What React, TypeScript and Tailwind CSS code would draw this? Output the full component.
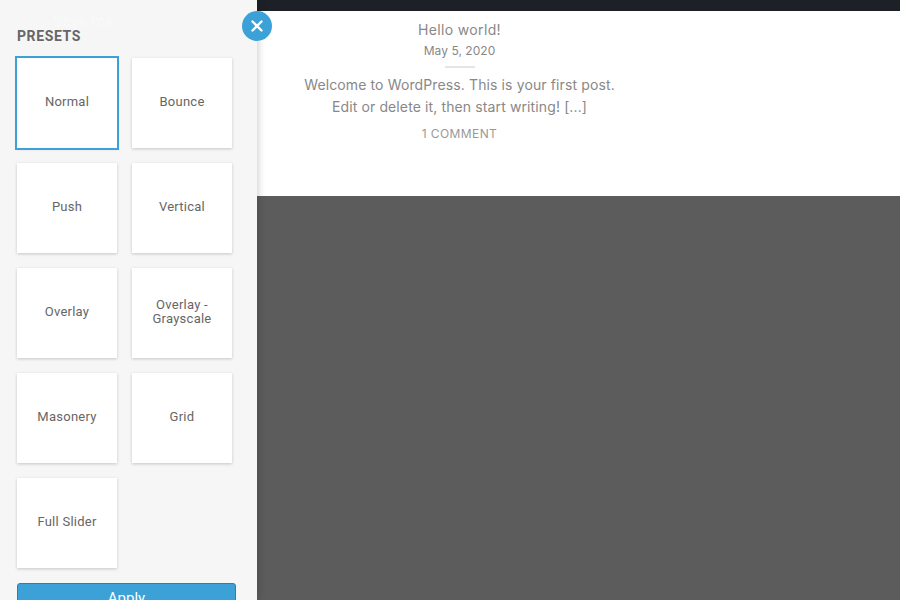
export default function App() {
  const presets = ["Normal", "Bounce", "Push", "Vertical", "Overlay", "Overlay - Grayscale", "Masonery", "Grid", "Full Slider"];
  return (
    <div className="relative flex h-[600px] w-[900px] overflow-hidden bg-[#5c5c5c]">
      <aside className="relative z-10 flex h-[600px] w-[257px] shrink-0 flex-col overflow-hidden bg-[#f6f6f6] px-[17px] pt-[28px] shadow-[0_0_8px_rgba(0,0,0,0.25)] font-['Roboto',sans-serif]">
        <span className="absolute left-[53px] top-[12px] text-[16px] leading-[20px] text-[#f9f9f9]">Save me</span>
        <h2 className="text-[14px] font-bold leading-[16px] tracking-[0.6px] text-[#666666]">PRESETS</h2>
        <div className="mt-[14px] grid w-[215px] grid-cols-[100px_100px] gap-[15px]">
          {presets.map((p, i) => (
            <button
              key={p}
              className={`flex h-[90px] w-[100px] items-center justify-center bg-white px-2 pb-[3px] text-center text-[13px] leading-[14px] tracking-[0.25px] text-[#666666] shadow-[0_1px_3px_rgba(0,0,0,0.2)] ${i === 0 ? "outline-2 outline-[#3ba1d6]" : ""}`}
            >
              {p}
            </button>
          ))}
        </div>
        <button className="mt-[15px] h-[30px] w-[219px] shrink-0 rounded-[3px] border border-[#2a7fb0] bg-[#3ba1d6] text-[15px] leading-[26px] text-white">Apply</button>
      </aside>
      <button className="absolute left-[242px] top-[11px] z-20 flex h-[30px] w-[30px] items-center justify-center rounded-full bg-[#3ba1d6]">
        <svg width="12" height="12" viewBox="0 0 12 12"><path d="M1.5 1.5 10.5 10.5M10.5 1.5 1.5 10.5" stroke="#fff" strokeWidth="2.4" strokeLinecap="round" /></svg>
      </button>
      <main className="flex-1">
        <div className="h-[11px] bg-[#1d2027]" />
        <article className="h-[185px] bg-white font-['Inter',sans-serif]">
          <div className="flex w-[405px] flex-col items-center text-center">
            <h1 className="mt-[10px] text-[14px] leading-[18px] tracking-[0.35px] text-[#888888]">Hello world!</h1>
            <p className="mt-[4px] text-[12px] leading-[16px] tracking-[0.05px] text-[#888888]">May 5, 2020</p>
            <div className="mt-[7px] h-[2px] w-[30px] bg-[#e5e5e5]" />
            <p className="mt-[6px] text-[14px] leading-[22px] tracking-[0.12px] text-[#888888]">Welcome to WordPress. This is your first post.<br />Edit or delete it, then start writing! [...]</p>
            <p className="mt-[8px] text-[12px] leading-[16px] tracking-[0.4px] text-[#999999]">1 COMMENT</p>
          </div>
        </article>
      </main>
    </div>
  );
}
